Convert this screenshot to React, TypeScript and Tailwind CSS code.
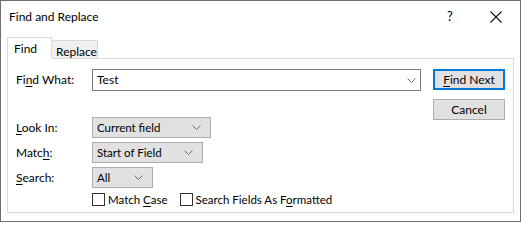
import React from "react";

const font = { fontFamily: 'Lato, "Liberation Sans", Arial, sans-serif' };

function U({ children }: { children: React.ReactNode }) {
  return <span className="underline underline-offset-2">{children}</span>;
}

function Chevron() {
  return (
    <svg width="9" height="5" viewBox="0 0 9 5" className="shrink-0">
      <path d="M0.5 0.5 L4.5 4.5 L8.5 0.5" fill="none" stroke="#6a6a6a" strokeWidth="1" />
    </svg>
  );
}

function Select({ value, width }: { value: string; width: string }) {
  return (
    <div
      className={`${width} h-[21px] flex items-center justify-between pl-[4px] pr-[9px] bg-[#e1e1e1] border border-[#adadad] text-[11.5px] text-black`}
    >
      <span>{value}</span>
      <Chevron />
    </div>
  );
}

function Checkbox({ children }: { children: React.ReactNode }) {
  return (
    <div className="flex items-center gap-[3px] text-[11.5px]">
      <div className="w-[13px] h-[13px] border border-[#333] bg-white" />
      <span>{children}</span>
    </div>
  );
}

export default function App() {
  return (
    <div
      className="w-[521px] h-[222px] bg-white border border-[#6f6f6f] flex flex-col text-black"
      style={font}
    >
      {/* title bar */}
      <div className="h-[36px] flex items-center pl-[8px] shrink-0">
        <span className="text-[12px] flex-1 -mt-[4px]">Find and Replace</span>
        <span className="text-[13px] w-[46px] text-center -mt-[4px]">?</span>
        <div className="w-[46px] flex justify-center -mt-[4px] mr-[1px]">
          <svg width="12" height="12" viewBox="0 0 12 12">
            <path d="M0.5 0.5 L11.5 11.5 M11.5 0.5 L0.5 11.5" stroke="#111" strokeWidth="1.1" />
          </svg>
        </div>
      </div>

      <div className="flex-1 flex flex-col px-[6px] pb-[8px]">
        {/* tabs */}
        <div className="flex items-end h-[22px] -mb-px relative z-10">
          <div className="h-[22px] w-[45px] pl-[6px] pt-[2px] bg-white border border-[#d9d9d9] border-b-white text-[12px]">
            Find
          </div>
          <div className="h-[19px] w-[46px] pl-[4px] pt-[2px] bg-[#f0f0f0] border border-l-0 border-[#d9d9d9] text-[12px]">
            Replace
          </div>
        </div>

        {/* panel */}
        <div className="flex-1 bg-white border border-[#d9d9d9] pl-[8px] pr-[8px] pt-[10px] text-[12px]">
          <div className="flex">
            <div className="flex-1 flex flex-col">
              <div className="flex items-center h-[22px]">
                <span className="w-[76px]">
                  Fi<U>n</U>d What:
                </span>
                <div className="w-[329px] h-[22px] flex items-center justify-between pl-[4px] pr-[4px] bg-white border border-[#7a7a7a]">
                  <span>Test</span>
                  <Chevron />
                </div>
              </div>
            </div>
            <div className="flex flex-col gap-[9px] ml-[10px]">
              <div className="w-[72px] h-[21px] flex items-center justify-center bg-[#e1e1e1] border-2 border-[#0078d7]">
                <span>
                  <U>F</U>ind Next
                </span>
              </div>
              <div className="w-[72px] h-[21px] flex items-center justify-center bg-[#e1e1e1] border border-[#adadad]">
                Cancel
              </div>
            </div>
          </div>

          <div className="flex flex-col gap-[4px] -mt-[3px]">
            <div className="flex items-center">
              <span className="w-[76px]">
                <U>L</U>ook In:
              </span>
              <Select value="Current field" width="w-[119px]" />
            </div>
            <div className="flex items-center">
              <span className="w-[76px]">
                Matc<U>h</U>:
              </span>
              <Select value="Start of Field" width="w-[111px]" />
            </div>
            <div className="flex items-center">
              <span className="w-[76px]">
                <U>S</U>earch:
              </span>
              <Select value="All" width="w-[61px]" />
            </div>
            <div className="flex items-center gap-[12px] pl-[76px] -mt-[1px]">
              <Checkbox>
                Match <U>C</U>ase
              </Checkbox>
              <Checkbox>
                Search Fields As F<U>o</U>rmatted
              </Checkbox>
            </div>
          </div>
        </div>
      </div>
    </div>
  );
}
